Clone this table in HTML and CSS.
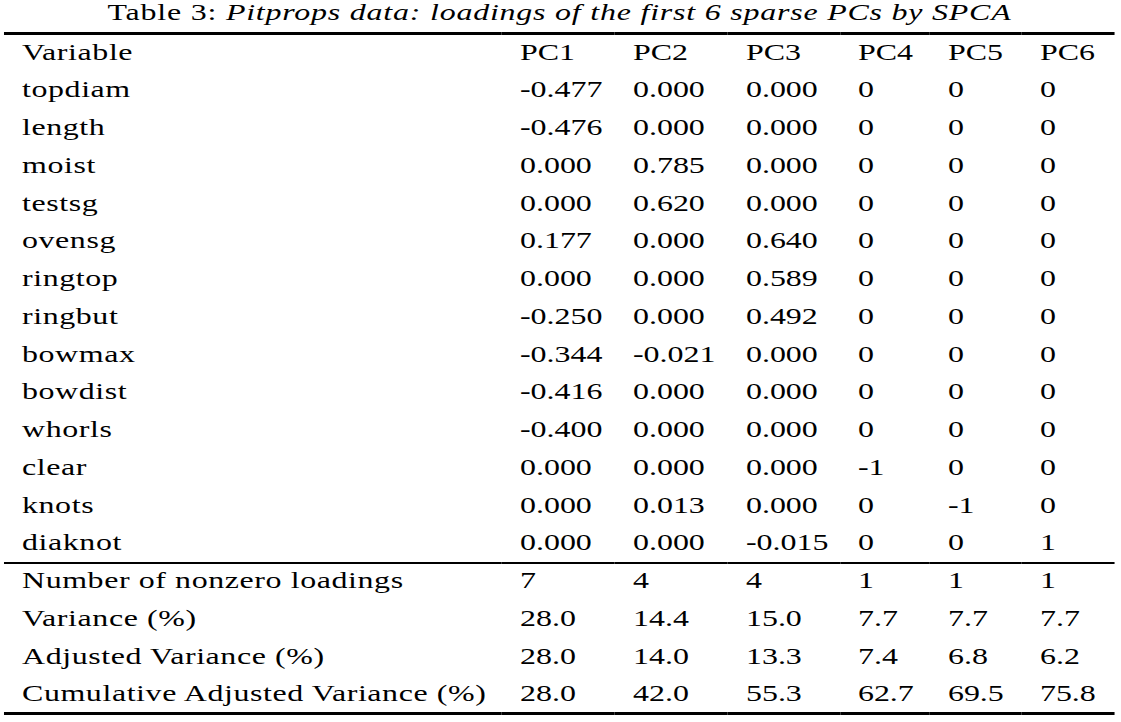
FILE: index.html
```html
<!DOCTYPE html>
<html lang="en">
<head>
<meta charset="utf-8">
<title>Table 3: Pitprops data</title>
<link rel="stylesheet" href="styles.css">
</head>
<body>
<main class="page">
  <table class="pc-table">
    <caption class="title">Table 3: <em>Pitprops data: loadings of the first 6 sparse PCs by SPCA</em></caption>
    <colgroup>
      <col class="c-var">
      <col class="c-pc1">
      <col class="c-pc2">
      <col class="c-pc3">
      <col class="c-pc4">
      <col class="c-pc5">
      <col class="c-pc6">
    </colgroup>
    <thead>
      <tr><th>Variable</th><th>PC1</th><th>PC2</th><th>PC3</th><th>PC4</th><th>PC5</th><th>PC6</th></tr>
    </thead>
    <tbody class="loadings">
      <tr><td>topdiam</td><td>-0.477</td><td>0.000</td><td>0.000</td><td>0</td><td>0</td><td>0</td></tr>
      <tr><td>length</td><td>-0.476</td><td>0.000</td><td>0.000</td><td>0</td><td>0</td><td>0</td></tr>
      <tr><td>moist</td><td>0.000</td><td>0.785</td><td>0.000</td><td>0</td><td>0</td><td>0</td></tr>
      <tr><td>testsg</td><td>0.000</td><td>0.620</td><td>0.000</td><td>0</td><td>0</td><td>0</td></tr>
      <tr><td>ovensg</td><td>0.177</td><td>0.000</td><td>0.640</td><td>0</td><td>0</td><td>0</td></tr>
      <tr><td>ringtop</td><td>0.000</td><td>0.000</td><td>0.589</td><td>0</td><td>0</td><td>0</td></tr>
      <tr><td>ringbut</td><td>-0.250</td><td>0.000</td><td>0.492</td><td>0</td><td>0</td><td>0</td></tr>
      <tr><td>bowmax</td><td>-0.344</td><td>-0.021</td><td>0.000</td><td>0</td><td>0</td><td>0</td></tr>
      <tr><td>bowdist</td><td>-0.416</td><td>0.000</td><td>0.000</td><td>0</td><td>0</td><td>0</td></tr>
      <tr><td>whorls</td><td>-0.400</td><td>0.000</td><td>0.000</td><td>0</td><td>0</td><td>0</td></tr>
      <tr><td>clear</td><td>0.000</td><td>0.000</td><td>0.000</td><td>-1</td><td>0</td><td>0</td></tr>
      <tr><td>knots</td><td>0.000</td><td>0.013</td><td>0.000</td><td>0</td><td>-1</td><td>0</td></tr>
      <tr><td>diaknot</td><td>0.000</td><td>0.000</td><td>-0.015</td><td>0</td><td>0</td><td>1</td></tr>
    </tbody>
    <tbody class="summary">
      <tr><td>Number of nonzero loadings</td><td>7</td><td>4</td><td>4</td><td>1</td><td>1</td><td>1</td></tr>
      <tr><td>Variance (%)</td><td>28.0</td><td>14.4</td><td>15.0</td><td>7.7</td><td>7.7</td><td>7.7</td></tr>
      <tr><td>Adjusted Variance (%)</td><td>28.0</td><td>14.0</td><td>13.3</td><td>7.4</td><td>6.8</td><td>6.2</td></tr>
      <tr><td>Cumulative Adjusted Variance (%)</td><td>28.0</td><td>42.0</td><td>55.3</td><td>62.7</td><td>69.5</td><td>75.8</td></tr>
    </tbody>
  </table>
</main>
</body>
</html>
```

FILE: styles.css
```css
:root {
  --s: 1.33;
}

html,
body {
  margin: 0;
  padding: 0;
  background: #ffffff;
}

body {
  font-family: "Liberation Serif", "Times New Roman", serif;
  font-size: 24px;
  color: #000000;
}

.page {
  width: calc(1121px / var(--s));
  transform: scaleX(var(--s));
  transform-origin: 0 0;
}

.pc-table {
  border-collapse: separate;
  border-spacing: 0;
  table-layout: fixed;
  width: calc(1111px / var(--s));
  margin-left: calc(4px / var(--s));
}

.title {
  line-height: 25px;
  padding-bottom: 7px;
  text-align: center;
  white-space: nowrap;
  letter-spacing: 0.6px;
}

.title em {
  font-style: italic;
}

.c-var { width: calc(498px / var(--s)); }
.c-pc1 { width: calc(113px / var(--s)); }
.c-pc2 { width: calc(113px / var(--s)); }
.c-pc3 { width: calc(112px / var(--s)); }
.c-pc4 { width: calc(90px / var(--s)); }
.c-pc5 { width: calc(92px / var(--s)); }
.c-pc6 { width: calc(93px / var(--s)); }

.pc-table th,
.pc-table td {
  padding: 4.5px 0 8.25px calc(18px / var(--s));
  line-height: 25px;
  text-align: left;
  font-weight: normal;
  white-space: nowrap;
  vertical-align: top;
}

.pc-table th:first-child,
.pc-table td:first-child {
  letter-spacing: 0.45px;
}

.pc-table thead th {
  border-top: 3px solid #000000;
}

.loadings tr:last-child td {
  padding-bottom: 6.25px;
}

.summary tr:first-child td {
  border-top: 2px solid #000000;
}

.summary tr:last-child td {
  border-bottom: 3px solid #000000;
  padding-bottom: 5.25px;
}
```
